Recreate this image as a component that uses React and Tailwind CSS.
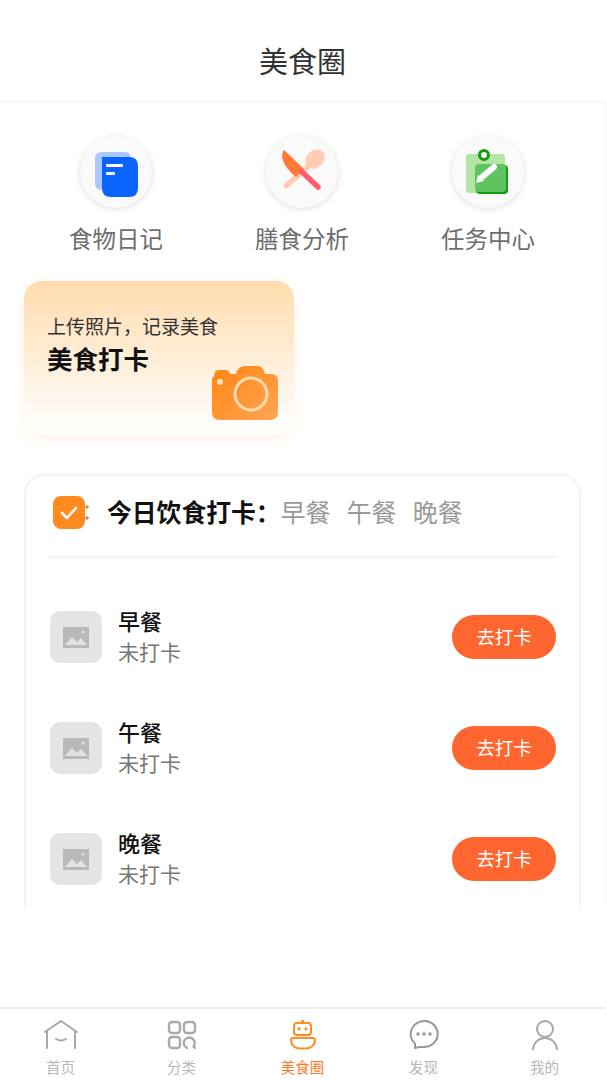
import React from "react"

const meals = ["早餐", "午餐", "晚餐"]

function DiaryIcon() {
    return (
        <svg width="72" height="72" viewBox="0 0 72 72">
            <rect x="15" y="16" width="36" height="38" rx="6" fill="#a9c8ff" />
            <path d="M22 21H49Q58 21 58 30V52Q58 61 49 61H31Q22 61 22 52Z" fill="#0a63ff" />
            <rect x="26" y="28" width="17" height="3" rx="1" fill="#fff" />
            <rect x="26" y="36" width="9" height="3" rx="1" fill="#fff" />
        </svg>
    )
}

function AnalysisIcon() {
    return (
        <svg width="72" height="72" viewBox="0 0 72 72">
            <ellipse cx="49" cy="23" rx="8.5" ry="11" transform="rotate(45 49 23)" fill="#ffcdb5" />
            <path d="M44 29L20 50" stroke="#ffc9b0" strokeWidth="5" strokeLinecap="round" />
            <path d="M18 14C14 20 16 29 30 41L38 33Z" fill="#ff7a33" />
            <path d="M35 35L52 51" stroke="#ff5f6d" strokeWidth="5.5" strokeLinecap="round" />
        </svg>
    )
}

function TaskIcon() {
    return (
        <svg width="72" height="72" viewBox="0 0 72 72">
            <rect x="14" y="18" width="39" height="39" rx="3" fill="#b5e5a5" />
            <rect x="24" y="29" width="32" height="29" rx="4" fill="#0fa00f" />
            <rect x="23" y="28" width="31" height="28" rx="4" fill="#5fc35f" />
            <circle cx="32" cy="19" r="4.5" fill="#fff" stroke="#0a9e0a" strokeWidth="3" />
            <path d="M29 42L42 31" stroke="#fff" strokeWidth="6" strokeLinecap="round" />
            <path d="M24 47L26 39L32 45Z" fill="#fff" />
        </svg>
    )
}

function CameraIcon() {
    return (
        <svg width="67" height="54" viewBox="0 0 67 54">
            <defs>
                <linearGradient id="cameraFill" x1="0" y1="0" x2="1" y2="1">
                    <stop offset="0" stopColor="#ff8412" />
                    <stop offset="1" stopColor="#ffa654" />
                </linearGradient>
            </defs>
            <path
                d="M3 10Q3 4 8 4H14Q18 4 19 8H25Q27 0 34 0H47Q52 0 54 8H60Q67 8 67 15V46Q67 54 59 54H9Q1 54 1 46V13Z"
                fill="url(#cameraFill)"
            />
            <circle cx="40" cy="28" r="16" fill="none" stroke="#ffdcb8" strokeWidth="3" />
            <circle cx="9" cy="16" r="3" fill="#ffdcb8" />
        </svg>
    )
}

function CheckIcon() {
    return (
        <svg width="36" height="36" viewBox="0 0 36 36">
            <rect x="0" y="1" width="32" height="33" rx="8" fill="#ff8a1f" />
            <circle cx="34" cy="12" r="1.8" fill="#c98a5a" />
            <circle cx="34" cy="23" r="1.8" fill="#c98a5a" />
            <path d="M9 18L14 23L23 13" fill="none" stroke="#fff" strokeWidth="2.6" strokeLinecap="round" strokeLinejoin="round" />
        </svg>
    )
}

function PhotoIcon() {
    return (
        <svg width="26" height="21" viewBox="0 0 26 21">
            <rect width="26" height="21" fill="#b9b9b9" />
            <path d="M2 18L9 10L14 15L18 11L24 18Z" fill="#e2e2e2" />
            <circle cx="20" cy="5" r="1.6" fill="#e2e2e2" />
        </svg>
    )
}

function HomeIcon() {
    return (
        <svg width="34" height="30" viewBox="0 0 34 30" fill="none" stroke="#a8a8a8" strokeWidth="2" strokeLinecap="round" strokeLinejoin="round">
            <path d="M1 12L17 1L33 12" />
            <path d="M3 11V28M31 11V28" />
            <path d="M12 19Q17 22 22 19" />
        </svg>
    )
}

function GridIcon() {
    return (
        <svg width="30" height="30" viewBox="0 0 30 30" fill="none" stroke="#aaa" strokeWidth="2.4" strokeLinecap="round">
            <rect x="2" y="2" width="11" height="11" rx="3" />
            <rect x="17" y="2" width="11" height="11" rx="3" />
            <rect x="2" y="17" width="11" height="11" rx="3" />
            <path d="M28 28L26.5 26.5A5.5 5.5 0 1 0 20 28" />
        </svg>
    )
}

function RobotIcon() {
    return (
        <svg width="26" height="30" viewBox="0 0 26 30" fill="none" stroke="#ff8f24" strokeWidth="2" strokeLinecap="round" strokeLinejoin="round">
            <circle cx="12.5" cy="1.2" r="0.6" fill="#ff8f24" />
            <rect x="4" y="3" width="17" height="12" rx="3" />
            <path d="M3 18H23Q25 18 25 20C25 26 20 28.5 16 28.5H10C6 28.5 1 26 1 20Q1 18 3 18Z" />
            <rect x="8" y="8" width="2" height="2" rx="0.5" fill="#ff8f24" strokeWidth="1" />
            <rect x="15" y="8" width="2" height="2" rx="0.5" fill="#ff8f24" strokeWidth="1" />
        </svg>
    )
}

function ChatIcon() {
    return (
        <svg width="30" height="30" viewBox="0 0 30 30" fill="none" stroke="#999" strokeWidth="2" strokeLinecap="round" strokeLinejoin="round">
            <path d="M6 28V23.5A13.5 13 0 1 1 15 27H10Z" />
            <circle cx="9" cy="14" r="0.8" fill="#999" />
            <circle cx="15" cy="14" r="0.8" fill="#999" />
            <circle cx="21" cy="14" r="0.8" fill="#999" />
        </svg>
    )
}

function UserIcon() {
    return (
        <svg width="26" height="30" viewBox="0 0 26 30" fill="none" stroke="#a8a8a8" strokeWidth="2" strokeLinecap="round">
            <circle cx="13" cy="9" r="8" />
            <path d="M1 29C2 22 7 18 13 18C19 18 24 22 25 29" />
        </svg>
    )
}

const shortcuts = [
    { label: "食物日记", icon: <DiaryIcon /> },
    { label: "膳食分析", icon: <AnalysisIcon /> },
    { label: "任务中心", icon: <TaskIcon /> },
]

const tabs = [
    { label: "首页", icon: <HomeIcon /> },
    { label: "分类", icon: <GridIcon /> },
    { label: "美食圈", icon: <RobotIcon />, active: true },
    { label: "发现", icon: <ChatIcon /> },
    { label: "我的", icon: <UserIcon /> },
]

export default function App() {
    return (
        <div className="w-[605px] h-[1080px] flex flex-col bg-white font-['Noto_Sans_CJK_SC','Liberation_Sans',sans-serif]">
            <header className="h-[102px] shrink-0 pt-10 text-center text-[29px] leading-[40px] text-[#333] border-b border-[#f5f5f5]">
                美食圈
            </header>

            <main className="w-[606px] h-[804px] shrink-0 overflow-hidden border-r border-[#f7f7f7]">
                <div className="flex pl-[23px] pt-[34px]">
                    {shortcuts.map((s) => (
                        <div key={s.label} className="w-[186px] flex flex-col items-center">
                            <div className="w-[72px] h-[72px] rounded-full bg-[#fafafa] shadow-[0_1px_6px_rgba(0,0,0,0.14)]">
                                {s.icon}
                            </div>
                            <div className="mt-[14px] text-[23.5px] leading-[32px] text-[#6e6e6e]">{s.label}</div>
                        </div>
                    ))}
                </div>

                <div className="relative ml-6 mt-[27px] w-[270px] h-[154px] pl-[23px] pt-[33px] rounded-[18px] bg-gradient-to-b from-[#ffdcae] to-[#ffffff] shadow-[0_3px_12px_rgba(255,170,90,0.16)]">
                    <div className="text-[19px] leading-[24px] text-[#333]">上传照片，记录美食</div>
                    <div className="mt-1 text-[25.5px] leading-[32px] font-bold text-[#111]">美食打卡</div>
                    <div className="absolute right-4 bottom-[15px]">
                        <CameraIcon />
                    </div>
                </div>

                <section className="ml-6 w-[557px] mt-[39px] h-[500px] rounded-[20px] border-2 border-[#f3f3f3] pl-[22px] pr-[23px] pt-[19px]">
                    <div className="flex items-center h-9">
                        <div className="ml-[5px] w-9 h-9">
                            <CheckIcon />
                        </div>
                        <span className="ml-[18px] pb-[3px] text-[24.8px] font-bold text-[#111]">今日饮食打卡：</span>
                        <div className="flex gap-4 pb-[2px] text-[25px] text-[#999]">
                            {meals.map((m) => (
                                <span key={m}>{m}</span>
                            ))}
                        </div>
                    </div>

                    <div className="mt-[25px] border-t-2 border-[#f3f3f3]" />

                    <div className="mt-[53px] flex flex-col gap-[59px]">
                        {meals.map((m) => (
                            <div key={m} className="flex items-center h-[52px]">
                                <div className="ml-[2px] w-[52px] h-[52px] rounded-[10px] bg-[#e5e5e5] flex items-center justify-center">
                                    <PhotoIcon />
                                </div>
                                <div className="ml-4 flex-1 pb-[3px]">
                                    <div className="text-[22px] leading-[30px] font-medium text-[#111]">{m}</div>
                                    <div className="text-[21px] leading-[32px] text-[#777]">未打卡</div>
                                </div>
                                <button className="w-[104px] h-11 rounded-full bg-[#ff652f] text-white text-[18.5px]">
                                    去打卡
                                </button>
                            </div>
                        ))}
                    </div>
                </section>
            </main>

            <div className="flex-1" />

            <nav className="h-[73px] shrink-0 flex border-t-2 border-[#eeeeee]">
                {tabs.map((t) => (
                    <div key={t.label} className="flex-1 flex flex-col items-center pt-[11px]">
                        <div className="h-[30px] flex items-center">{t.icon}</div>
                        <span className={`mt-[7px] text-[14.5px] leading-[20px] ${t.active ? "text-[#ff7a1f]" : "text-[#b3b8bd]"}`}>
                            {t.label}
                        </span>
                    </div>
                ))}
            </nav>
        </div>
    )
}
